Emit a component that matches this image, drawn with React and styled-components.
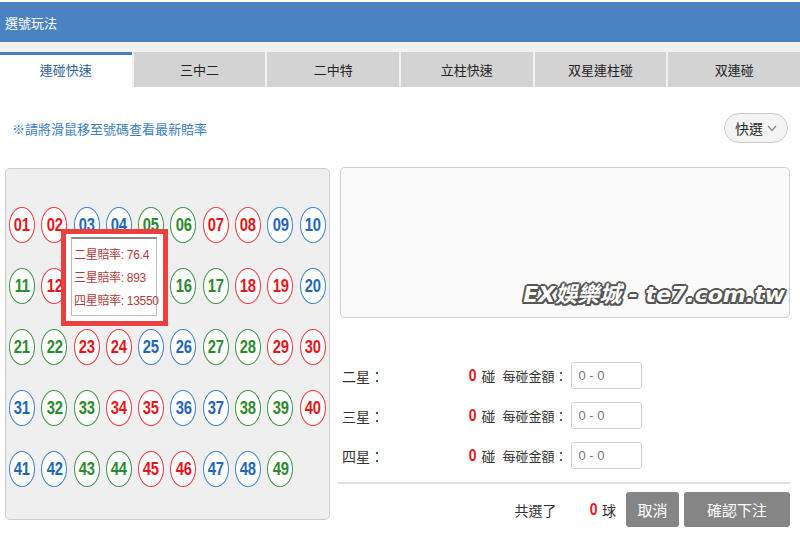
import React from "react";
import styled, { createGlobalStyle } from "styled-components";

const GlobalStyle = createGlobalStyle`
  html, body {
    margin: 0;
    padding: 0;
    background: #fff;
    font-family: "Liberation Sans", "Noto Sans CJK TC", sans-serif;
  }
`;

const CJK = `"Liberation Sans", "Noto Sans CJK TC", sans-serif`;

const RED = [1, 2, 7, 8, 12, 13, 18, 19, 23, 24, 29, 30, 34, 35, 40, 45, 46];
const BLUE = [3, 4, 9, 10, 14, 15, 20, 25, 26, 31, 36, 37, 41, 42, 47, 48];

const colorOf = (n) => (RED.includes(n) ? "red" : BLUE.includes(n) ? "blue" : "green");
const palette = { red: "#e5151d", blue: "#2266b8", green: "#2b8a2e" };
const ring = { red: "#ec3b40", blue: "#3f82c8", green: "#3f9441" };

const Page = styled.div`
  width: 800px;
  height: 533px;
  overflow: hidden;
  font-family: ${CJK};
`;

const Header = styled.div`
  height: 40px;
  margin-top: 2px;
  background: #4a83bf;
  color: #fff;
  font-size: 13px;
  display: flex;
  align-items: center;
  padding-left: 5px;
`;

const TabBar = styled.div`
  background: #f1f1f1;
  padding-top: 10px;
  display: flex;
  gap: 2px;
`;

const Tab = styled.div`
  flex: 1;
  height: 35px;
  box-sizing: border-box;
  display: flex;
  align-items: center;
  justify-content: center;
  padding-bottom: 4px;
  font-size: 13px;
  background: ${(p) => (p.$active ? "#fff" : "#d3d3d3")};
  color: ${(p) => (p.$active ? "#2c609f" : "#222")};
  border-top: 3px solid ${(p) => (p.$active ? "#4a80ba" : "#d3d3d3")};
`;

const HintRow = styled.div`
  display: flex;
  align-items: center;
  justify-content: space-between;
  padding: 26px 12px 0 12px;
  height: 30px;
`;

const Hint = styled.div`
  color: #3b7dc4;
  font-size: 13px;
`;

const QuickBtn = styled.div`
  width: 64px;
  height: 30px;
  box-sizing: border-box;
  border: 1px solid #c9c9c9;
  border-radius: 15px;
  background: #f4f4f4;
  display: flex;
  align-items: center;
  justify-content: center;
  gap: 4px;
  font-size: 14px;
  color: #222;
`;

const Main = styled.div`
  display: flex;
  gap: 10px;
  padding: 24px 10px 0 5px;
`;

const BallPanel = styled.div`
  position: relative;
  width: 325px;
  height: 352px;
  box-sizing: border-box;
  margin-top: 1px;
  background: #efefef;
  border: 1px solid #cfcfcf;
  border-radius: 5px;
  padding: 38px 0 0 3px;
`;

const BallGrid = styled.div`
  display: grid;
  grid-template-columns: repeat(10, 26px);
  column-gap: 6.3px;
  row-gap: 25px;
`;

const Ball = styled.div`
  width: 26px;
  height: 36px;
  box-sizing: border-box;
  border-radius: 50%;
  background: #fff;
  border: 1.3px solid ${(p) => ring[p.$c]};
  color: ${(p) => palette[p.$c]};
  font-weight: bold;
  font-size: 18px;
  display: flex;
  align-items: center;
  justify-content: center;
`;

const BallNum = styled.span`
  display: inline-block;
  transform: scaleX(0.82);
  letter-spacing: -0.3px;
`;

const Tooltip = styled.div`
  position: absolute;
  left: 55px;
  top: 60px;
  width: 107px;
  height: 97px;
  box-sizing: border-box;
  border: 5px solid #e8413f;
  background: #fff;
  padding: 3px 6px 5px 5px;
`;

const TipInner = styled.div`
  height: 100%;
  box-sizing: border-box;
  border: 1px solid #bdbdbd;
  border-top: 2px solid #8a8a8a;
  padding: 7px 0 0 2px;
  display: flex;
  flex-direction: column;
  gap: 5px;
`;

const TipLine = styled.div`
  font-size: 12px;
  color: #b23a3a;
  line-height: 18px;
  white-space: nowrap;
  letter-spacing: -0.3px;
`;

const Right = styled.div`
  flex: 1;
  display: flex;
  flex-direction: column;
`;

const TextBox = styled.div`
  position: relative;
  height: 151px;
  box-sizing: border-box;
  background: #fafafa;
  border: 1px solid #d0d0d0;
  border-radius: 5px;
`;

const Watermark = styled.div`
  position: absolute;
  right: 4px;
  bottom: 9px;
  font-family: "DejaVu Sans", "Noto Sans CJK TC", sans-serif;
  font-style: italic;
  font-weight: bold;
  font-size: 22px;
  color: #fff;
  letter-spacing: 0;
  text-shadow: 2px 0 0 #555, -2px 0 0 #555, 0 2px 0 #555, 0 -2px 0 #555,
    1.5px 1.5px 0 #555, -1.5px -1.5px 0 #555, 1.5px -1.5px 0 #555, -1.5px 1.5px 0 #555;
`;

const Rows = styled.div`
  display: flex;
  flex-direction: column;
  gap: 13px;
  padding: 44px 0 0 2px;
`;

const StarRow = styled.div`
  display: flex;
  align-items: center;
  height: 27px;
  font-size: 14px;
  color: #333;
`;

const StarLabel = styled.div`
  width: 126px;
`;

const Count = styled.span`
  display: inline-block;
  color: #e5151d;
  font-weight: bold;
  font-size: 17px;
  margin-right: 4px;
  transform: scaleX(0.82);
`;

const Unit = styled.span`
  margin-right: 7px;
`;

const Amount = styled.span`
  font-size: 13px;
  margin-right: 4px;
`;

const AmountInput = styled.input`
  width: 71px;
  height: 27px;
  box-sizing: border-box;
  border: 1px solid #cfcfcf;
  border-radius: 3px;
  padding: 0 6px;
  font-family: ${CJK};
  font-size: 13px;
  color: #444;
  &::placeholder {
    color: #777;
  }
`;

const Divider = styled.div`
  height: 2px;
  background: #e2e2e2;
  margin-top: 13px;
  margin-left: -2px;
`;

const Footer = styled.div`
  display: flex;
  align-items: center;
  justify-content: flex-end;
  margin-top: 8px;
  font-size: 14px;
  color: #333;
`;

const Selected = styled.span`
  margin-right: 32px;
`;

const Button = styled.button`
  height: 35px;
  width: ${(p) => p.$w}px;
  margin-left: ${(p) => p.$ml}px;
  border: none;
  border-radius: 3px;
  background: #858585;
  color: #fff;
  font-family: ${CJK};
  font-size: 15px;
  padding: 0;
`;

const tabs = ["連碰快速", "三中二", "二中特", "立柱快速", "双星連柱碰", "双連碰"];
const stars = ["二星：", "三星：", "四星："];
const balls = Array.from({ length: 49 }, (_, i) => i + 1);

export default function App() {
  return (
    <Page>
      <GlobalStyle />
      <Header>選號玩法</Header>
      <TabBar>
        {tabs.map((t, i) => (
          <Tab key={t} $active={i === 0}>
            {t}
          </Tab>
        ))}
      </TabBar>
      <HintRow>
        <Hint>※請將滑鼠移至號碼查看最新賠率</Hint>
        <QuickBtn>
          快選
          <svg width="10" height="7" viewBox="0 0 10 7">
            <path d="M1 1 L5 5.5 L9 1" fill="none" stroke="#888" strokeWidth="1.2" />
          </svg>
        </QuickBtn>
      </HintRow>
      <Main>
        <BallPanel>
          <BallGrid>
            {balls.map((n) => (
              <Ball key={n} $c={colorOf(n)}>
                <BallNum>{String(n).padStart(2, "0")}</BallNum>
              </Ball>
            ))}
          </BallGrid>
          <Tooltip>
            <TipInner>
              <TipLine>二星賠率: 76.4</TipLine>
              <TipLine>三星賠率: 893</TipLine>
              <TipLine>四星賠率: 13550</TipLine>
            </TipInner>
          </Tooltip>
        </BallPanel>
        <Right>
          <TextBox>
            <Watermark>EX娛樂城 - te7.com.tw</Watermark>
          </TextBox>
          <Rows>
            {stars.map((s) => (
              <StarRow key={s}>
                <StarLabel>{s}</StarLabel>
                <Count>0</Count>
                <Unit>碰</Unit>
                <Amount>每碰金額：</Amount>
                <AmountInput placeholder="0 - 0" />
              </StarRow>
            ))}
          </Rows>
          <Divider />
          <Footer>
            <Selected>共選了</Selected>
            <Count>0</Count>
            <span>球</span>
            <Button $w={53} $ml={10}>取消</Button>
            <Button $w={106} $ml={5}>確認下注</Button>
          </Footer>
        </Right>
      </Main>
    </Page>
  );
}
